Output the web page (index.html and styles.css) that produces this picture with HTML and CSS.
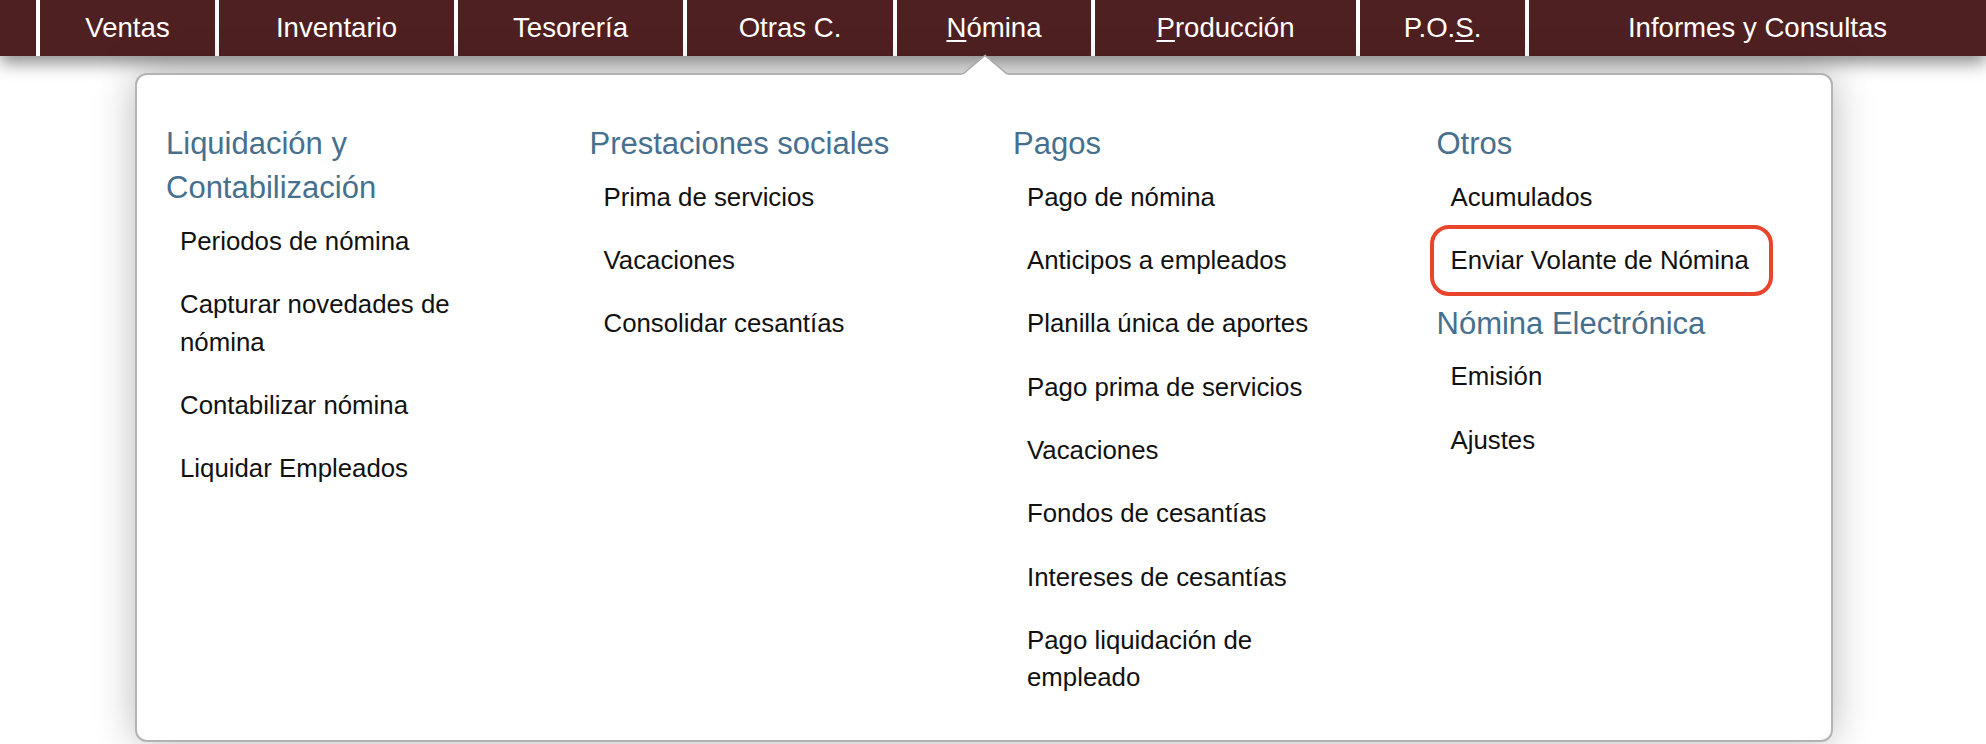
FILE: index.html
```html
<!DOCTYPE html>
<html lang="es">
<head>
<meta charset="utf-8">
<title>Nómina</title>
<link rel="stylesheet" href="styles.css">
</head>
<body>
<nav class="topnav">
  <div class="nav-lead"></div>
  <a class="nav-item w1">Ventas</a>
  <a class="nav-item w2">Inventario</a>
  <a class="nav-item w3">Tesorería</a>
  <a class="nav-item w4">Otras C.</a>
  <a class="nav-item w5"><u>N</u>ómina</a>
  <a class="nav-item w6"><u>P</u>roducción</a>
  <a class="nav-item w7">P.O.<u>S</u>.</a>
  <a class="nav-item w8">Informes y Consultas</a>
</nav>
<div class="menu-panel">
  <svg class="caret" width="46" height="21" viewBox="0 0 46 21">
    <polygon points="0,21 23,1 46,21" fill="#ffffff"/>
    <polyline points="1,20 23,1.5 45,20" fill="none" stroke="#a9a9a9" stroke-width="1.6"/>
  </svg>
  <div class="menu-grid">
    <div class="menu-col">
      <div class="col-title">Liquidación y Contabilización</div>
      <div class="menu-item">Periodos de nómina</div>
      <div class="menu-item">Capturar novedades de nómina</div>
      <div class="menu-item">Contabilizar nómina</div>
      <div class="menu-item">Liquidar Empleados</div>
    </div>
    <div class="menu-col">
      <div class="col-title">Prestaciones sociales</div>
      <div class="menu-item">Prima de servicios</div>
      <div class="menu-item">Vacaciones</div>
      <div class="menu-item">Consolidar cesantías</div>
    </div>
    <div class="menu-col">
      <div class="col-title">Pagos</div>
      <div class="menu-item">Pago de nómina</div>
      <div class="menu-item">Anticipos a empleados</div>
      <div class="menu-item">Planilla única de aportes</div>
      <div class="menu-item">Pago prima de servicios</div>
      <div class="menu-item">Vacaciones</div>
      <div class="menu-item">Fondos de cesantías</div>
      <div class="menu-item">Intereses de cesantías</div>
      <div class="menu-item">Pago liquidación de empleado</div>
    </div>
    <div class="menu-col">
      <div class="col-title">Otros</div>
      <div class="menu-item">Acumulados</div>
      <div class="menu-item highlight">Enviar Volante de Nómina</div>
      <div class="col-title sub">Nómina Electrónica</div>
      <div class="menu-item">Emisión</div>
      <div class="menu-item">Ajustes</div>
    </div>
  </div>
</div>
</body>
</html>
```

FILE: styles.css
```css
html, body {
  margin: 0;
  padding: 0;
  background: #ffffff;
}

body {
  font-family: "Liberation Sans", Arial, Helvetica, sans-serif;
  width: 1986px;
  height: 744px;
  overflow: hidden;
}

.topnav {
  display: flex;
  height: 56px;
  background: #4f2022;
  box-shadow: 0 7px 16px rgba(0, 0, 0, 0.45);
}

.nav-lead {
  width: 36px;
  flex: none;
}

.nav-item {
  box-sizing: border-box;
  flex: none;
  display: flex;
  align-items: center;
  justify-content: center;
  border-left: 4px solid #ffffff;
  color: #ffffff;
  font-size: 27.6px;
  text-decoration: none;
  white-space: nowrap;
}

.nav-item u {
  text-decoration-thickness: 2px;
  text-underline-offset: 3px;
}

.w1 { width: 179px; }
.w2 { width: 239px; }
.w3 { width: 229px; }
.w4 { width: 210px; }
.w5 { width: 198px; }
.w6 { width: 265px; }
.w7 { width: 169px; }
.w8 { flex: 1; }

.menu-panel {
  position: relative;
  box-sizing: border-box;
  width: 1698px;
  margin: 17px 0 0 135px;
  padding: 47px 0 30px;
  background: #ffffff;
  border: 2px solid #b3b3b3;
  border-radius: 12px;
  box-shadow: 0 0 40px rgba(0, 0, 0, 0.28);
}

.caret {
  position: absolute;
  left: 825px;
  top: -21px;
  display: block;
}

.menu-grid {
  display: grid;
  grid-template-columns: repeat(4, 1fr);
}

.menu-col {
  padding: 0 50px 0 29px;
}

.col-title {
  font-size: 31px;
  line-height: 44px;
  color: #46708e;
}

.col-title.sub {
  margin-top: 9px;
}

.menu-item {
  position: relative;
  padding: 12.9px 0 12.9px 14px;
  font-size: 25.8px;
  line-height: 37.5px;
  color: #111111;
}

.menu-item.highlight::after {
  content: "";
  position: absolute;
  top: -4px;
  bottom: -3px;
  left: -7px;
  width: 343px;
  box-sizing: border-box;
  border: 4px solid #e8452c;
  border-radius: 19px;
}
```
